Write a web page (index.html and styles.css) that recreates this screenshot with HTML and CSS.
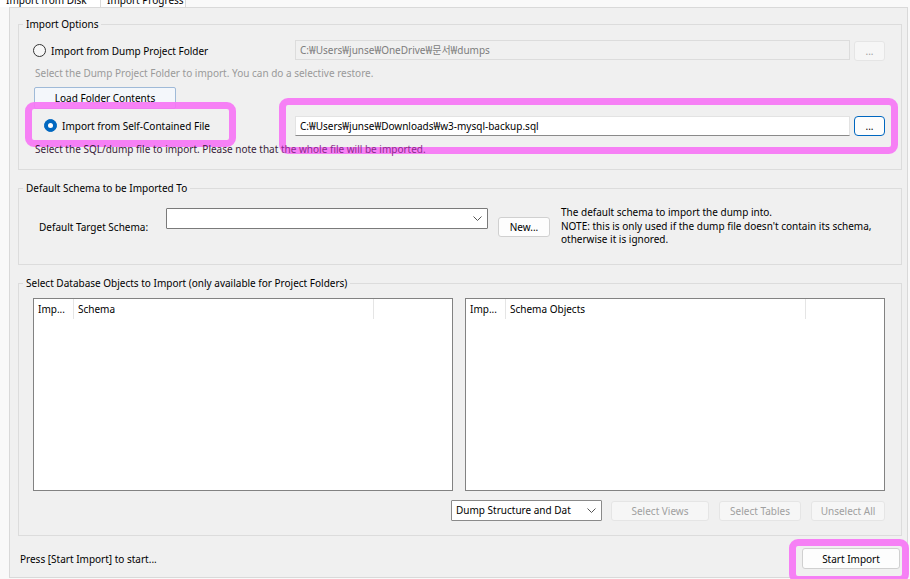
FILE: index.html
```html
<!DOCTYPE html>
<html>
<head>
<meta charset="utf-8">
<link rel="stylesheet" href="styles.css">
</head>
<body>
<div class="tabs">
  <div class="tab tab-active">Import from Disk</div>
  <div class="tab">Import Progress</div>
</div>
<div class="panel">
  <div class="group group-options">
    <div class="group-title">Import Options</div>
    <div class="row row1">
      <div class="opt opt1"><span class="radio"></span><span>Import from Dump Project Folder</span></div>
      <div class="field field-disabled">C:₩Users₩junse₩OneDrive₩문서₩dumps</div>
      <div class="btn btn-dots btn-disabled">...</div>
    </div>
    <div class="hint hint-gray">Select the Dump Project Folder to import. You can do a selective restore.</div>
    <div class="btn btn-load">Load Folder Contents</div>
    <div class="row row2">
      <div class="opt opt2"><span class="radio radio-on"></span><span>Import from Self-Contained File</span></div>
      <div class="field field-active">C:₩Users₩junse₩Downloads₩w3-mysql-backup.sql</div>
      <div class="btn btn-dots btn-focus">...</div>
    </div>
    <div class="hint hint-dark">Select the SQL/dump file to import. Please note that <span class="hint-over">the whole file will be imported.</span></div>
  </div>

  <div class="group group-schema">
    <div class="group-title">Default Schema to be Imported To</div>
    <div class="schema-row">
      <div class="schema-label">Default Target Schema:</div>
      <div class="combo combo-schema">
        <svg class="chev" width="9" height="5" viewBox="0 0 9 5"><polyline points="0.5,0.5 4.5,4.5 8.5,0.5" fill="none" stroke="#555" stroke-width="1"/></svg>
      </div>
      <div class="btn btn-new">New...</div>
      <div class="note">The default schema to import the dump into.<br>NOTE: this is only used if the dump file doesn't contain its schema,<br>otherwise it is ignored.</div>
    </div>
  </div>

  <div class="group group-objects">
    <div class="group-title">Select Database Objects to Import (only available for Project Folders)</div>
    <div class="lists">
      <div class="list">
        <div class="list-head">
          <div class="col col-imp">Imp...</div>
          <div class="col col-name">Schema</div>
        </div>
      </div>
      <div class="list">
        <div class="list-head">
          <div class="col col-imp">Imp...</div>
          <div class="col col-name">Schema Objects</div>
        </div>
      </div>
    </div>
    <div class="controls">
      <div class="combo combo-dump">Dump Structure and Dat
        <svg class="chev" width="9" height="5" viewBox="0 0 9 5"><polyline points="0.5,0.5 4.5,4.5 8.5,0.5" fill="none" stroke="#555" stroke-width="1"/></svg>
      </div>
      <div class="btn btn-disabled btn-views">Select Views</div>
      <div class="btn btn-disabled btn-tables">Select Tables</div>
      <div class="btn btn-disabled btn-unsel">Unselect All</div>
    </div>
  </div>

  <div class="status-row">
    <div class="status">Press [Start Import] to start...</div>
    <div class="btn btn-start">Start Import</div>
  </div>
</div>

<div class="hl hl1"></div>
<div class="hl hl2"></div>
<div class="hl hl3"></div>
</body>
</html>
```
FILE: styles.css
```css
* { box-sizing: border-box; }
html, body { margin: 0; padding: 0; }
body {
  width: 910px;
  height: 579px;
  overflow: hidden;
  position: relative;
  background: #f9f9f9;
  font-family: "Noto Sans", "Noto Sans CJK KR", sans-serif;
  font-size: 10px;
  color: #000;
}

.tabs {
  height: 7px;
  overflow: hidden;
  display: flex;
  align-items: flex-end;
}
.tab {
  height: 15px;
  line-height: 15px;
  padding: 0 6px;
  width: 85px;
  background: #fdfdfd;
  border: 1px solid #d9d9d9;
  border-left: none;
  border-bottom: none;
  white-space: nowrap;
  overflow: hidden;
}
.tab-active { width: 101px; background: #ffffff; }

.panel {
  margin-left: 9px;
  width: 899px;
  height: 571px;
  border: 1px solid #d9d9d9;
  background: #f0f0f0;
  padding-top: 16px;
}

.group {
  margin: 0 5px 0 8px;
  border: 1px solid #dcdcdc;
}
.group-title {
  display: block;
  width: fit-content;
  margin: -8px 0 0 4px;
  padding: 0 3px;
  height: 15px;
  line-height: 15px;
  background: #f0f0f0;
  white-space: nowrap;
}

.group-options { padding-bottom: 13px; }
.row {
  display: flex;
  align-items: center;
  height: 21px;
  padding-right: 16px;
}
.row1 { margin-top: 8px; }
.row2 { margin-top: 6px; }
.opt {
  flex: 1;
  display: flex;
  align-items: center;
  white-space: nowrap;
}
.opt1 { padding-left: 14px; }
.opt2 { padding-left: 25px; }
.radio {
  width: 13px;
  height: 13px;
  border-radius: 50%;
  border: 1px solid #333;
  background: #f7f7f7;
  margin-right: 5px;
  flex: none;
  display: flex;
  align-items: center;
  justify-content: center;
}
.radio-on {
  border-color: #0067c0;
  background: #0067c0;
}
.radio-on::after {
  content: "";
  width: 5px;
  height: 5px;
  border-radius: 50%;
  background: #fff;
}
.field {
  width: 555px;
  height: 20px;
  line-height: 18px;
  padding-left: 4px;
  white-space: nowrap;
  overflow: hidden;
}
.field-disabled {
  background: #f0f0f0;
  border: 1px solid #dcdcdc;
  color: #7d7d7d;
  align-self: flex-start;
}
.field-active {
  background: #fff;
  border: 1px solid #e3e3e3;
  border-bottom-color: #8a8a8a;
  color: #000;
}
.btn {
  display: flex;
  align-items: center;
  justify-content: center;
  height: 20px;
  border: 1px solid #d0d0d0;
  border-radius: 3px;
  background: #fdfdfd;
  white-space: nowrap;
  flex: none;
}
.btn-dots {
  width: 31px;
  margin-left: 4px;
}
.btn-disabled {
  background: #f6f6f6;
  border-color: #e5e5e5;
  color: #a0a0a0;
}
.row1 .btn-dots { align-self: flex-end; }
.btn-focus {
  border: 1px solid #0067c0;
  border-radius: 4px;
}
.hint {
  height: 14px;
  line-height: 14px;
  padding-left: 16px;
  margin-top: 5px;
  white-space: nowrap;
}
.hint-gray { color: #9a9a9a; }
.hint-dark {
  color: #3a1e3a;
  margin-top: 6px;
  position: relative;
  z-index: 2;
}
.hint-over { color: #8c2a8c; }
.btn-load {
  margin: 7px 0 0 15px;
  width: 142px;
  height: 22px;
  border-color: #9fbad8;
  border-radius: 2px;
  background: #f4f7fb;
}

.group-schema { margin-top: 18px; }
.schema-row {
  display: flex;
  align-items: flex-start;
  height: 68px;
  padding-top: 12px;
}
.schema-label {
  margin: 12px 0 0 20px;
  width: 127px;
  line-height: 14px;
  white-space: nowrap;
}
.combo {
  position: relative;
  height: 21px;
  background: #fff;
  border: 1px solid #7a7a7a;
  border-radius: 1px;
  white-space: nowrap;
  line-height: 19px;
  padding-left: 4px;
}
.combo-schema { width: 322px; }
.chev {
  position: absolute;
  right: 5px;
  top: 7px;
}
.btn-new {
  width: 52px;
  margin: 9px 0 0 10px;
}
.note {
  margin: -2px 0 0 11px;
  line-height: 13.5px;
  white-space: nowrap;
}

.group-objects { margin-top: 18px; padding-bottom: 14px; }
.lists {
  display: flex;
  gap: 12px;
  margin-top: 7px;
  padding-left: 14px;
}
.list {
  width: 420px;
  height: 193px;
  background: #fff;
  border: 1px solid #828282;
}
.list-head {
  display: flex;
  height: 20px;
}
.col {
  height: 20px;
  line-height: 20px;
  padding-left: 4px;
  border-right: 1px solid #e5e5e5;
  white-space: nowrap;
  overflow: hidden;
}
.col-imp { width: 40px; }
.col-name { width: 300px; }
.controls {
  display: flex;
  justify-content: flex-end;
  align-items: flex-start;
  gap: 10px;
  margin-top: 9px;
  padding-right: 16px;
  height: 21px;
}
.combo-dump {
  width: 151px;
  margin-right: -1px;
  border-color: #8a8a8a;
}
.controls .btn { margin-top: 1px; }
.btn-views { width: 98px; }
.btn-tables { width: 82px; }
.btn-unsel { width: 74px; }

.status-row {
  display: flex;
  justify-content: space-between;
  align-items: center;
  margin-top: 12px;
  height: 21px;
  padding: 0 7px 0 10px;
}
.btn-start {
  width: 98px;
  height: 21px;
  border-color: #d0d0d0;
}

.hl {
  position: absolute;
  border: 7px solid rgba(246, 118, 245, 0.92);
  border-radius: 9px;
  z-index: 1;
}
.hl1 { left: 25px; top: 102px; width: 211px; height: 45px; }
.hl2 { left: 279px; top: 98px; width: 619px; height: 56px; }
.hl3 { left: 789px; top: 539px; width: 120px; height: 44px; }
```
